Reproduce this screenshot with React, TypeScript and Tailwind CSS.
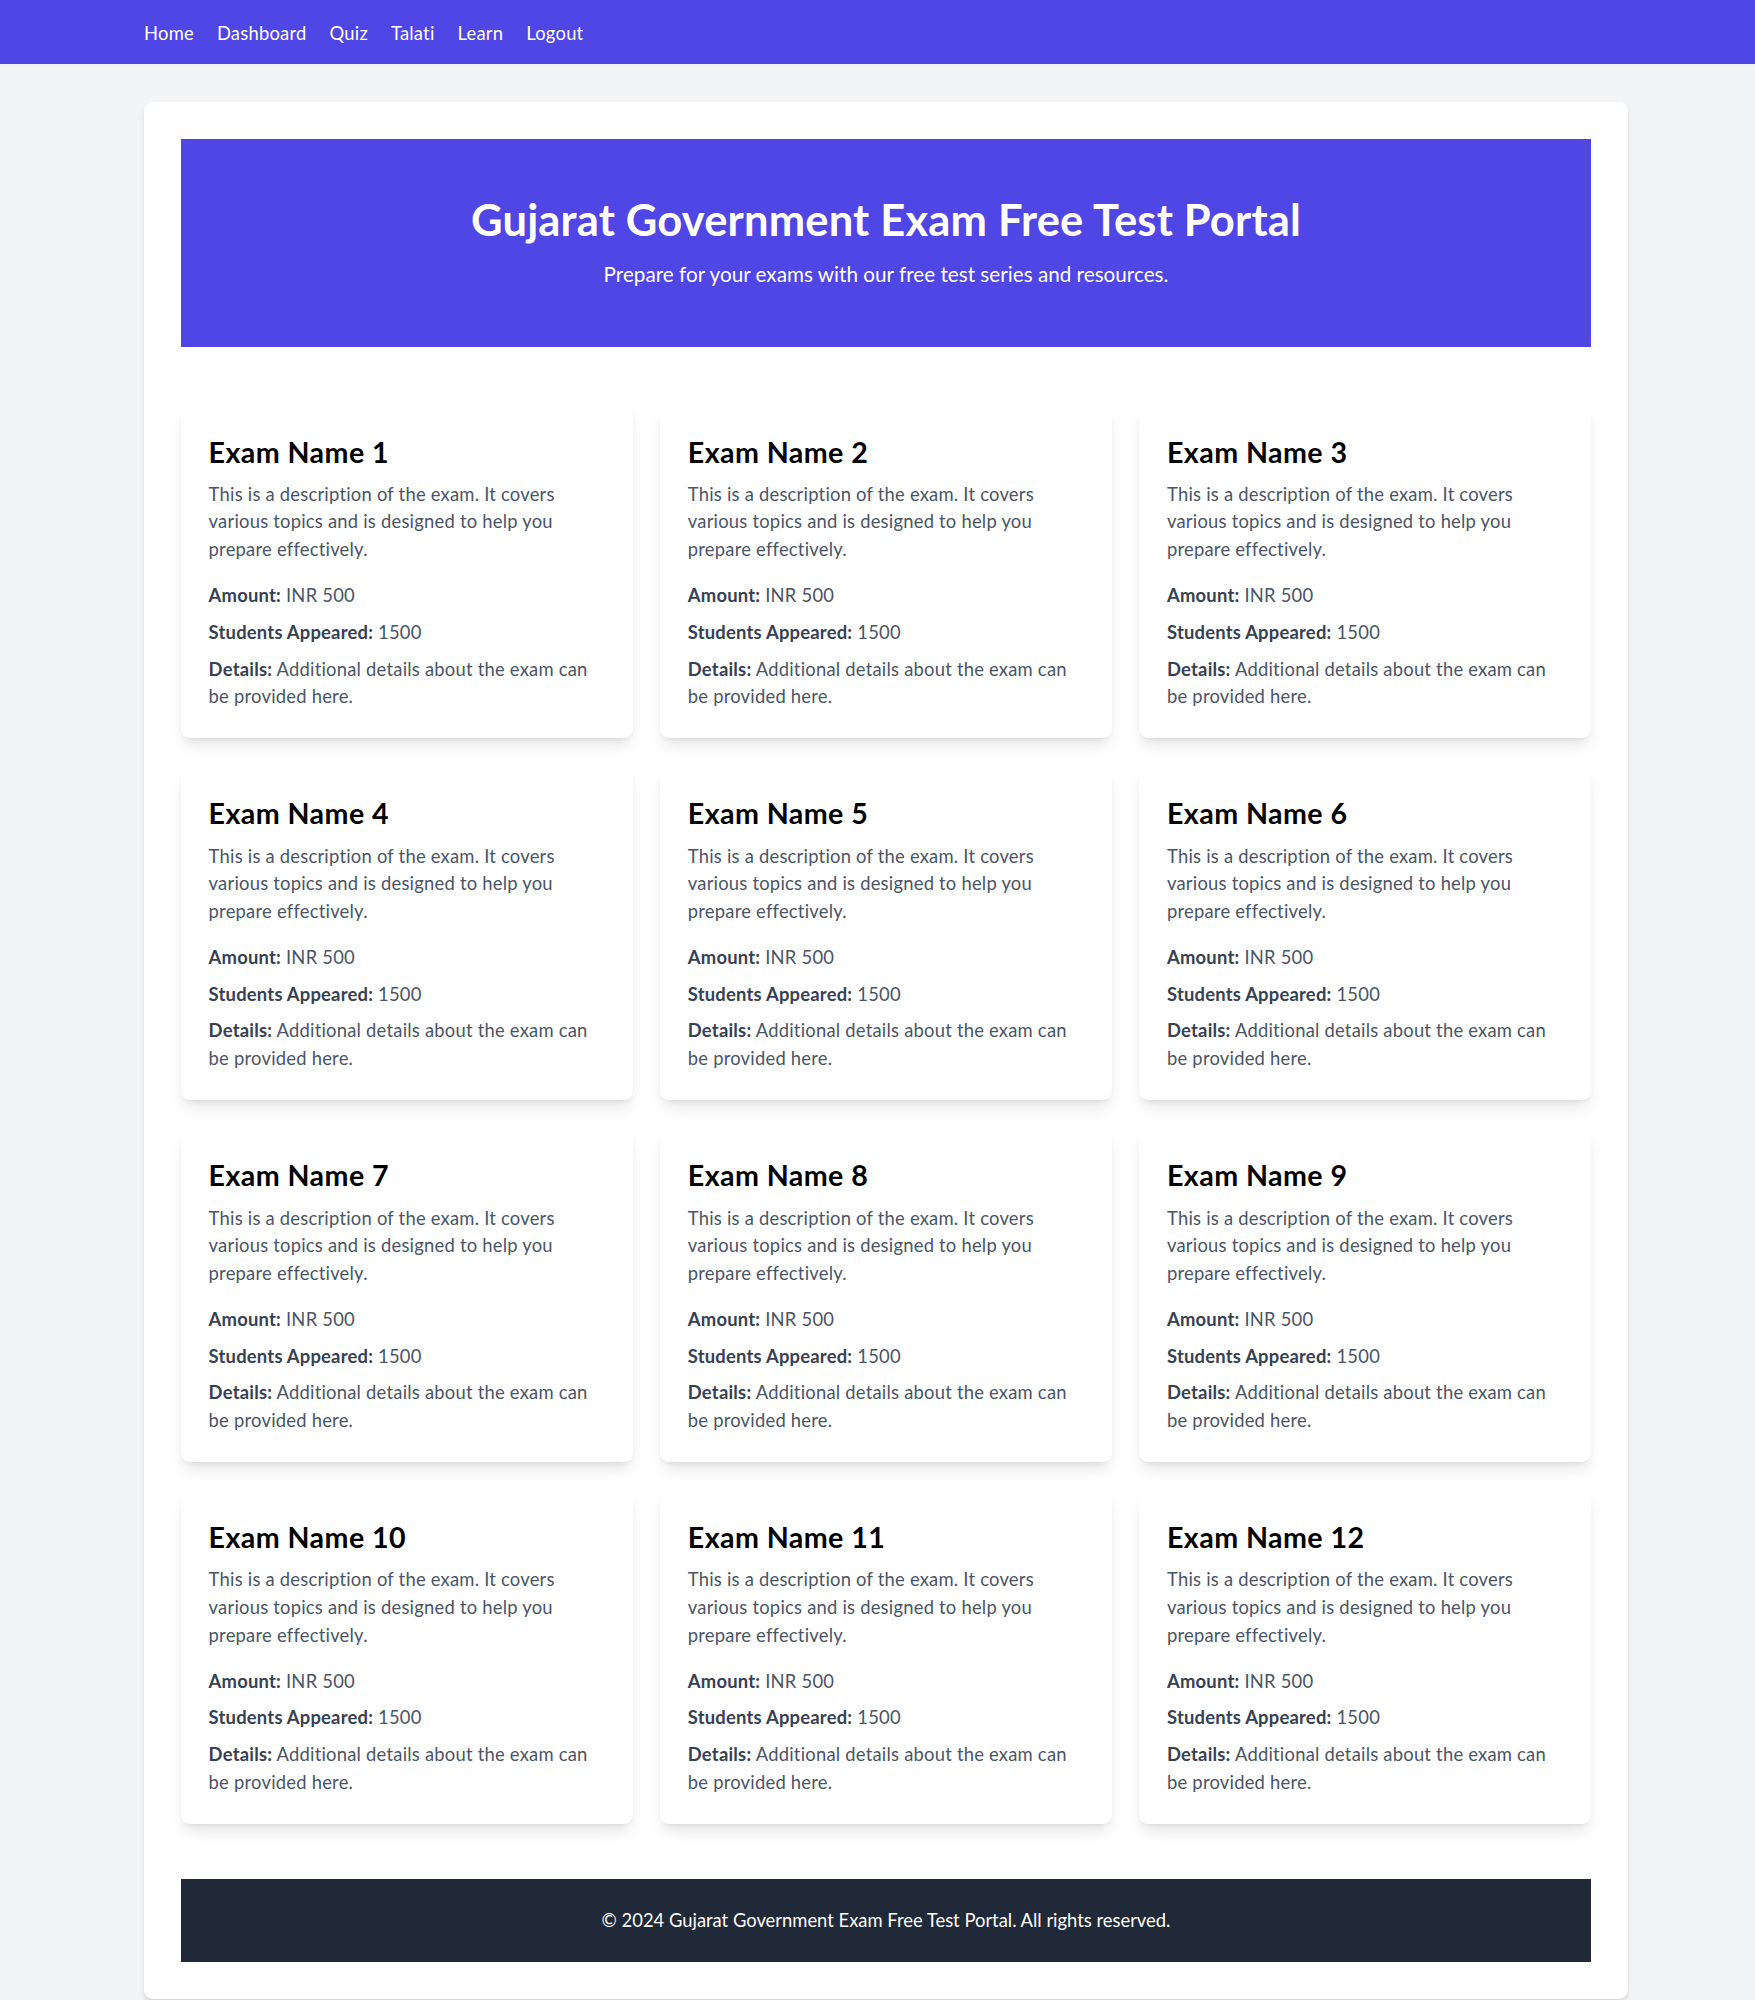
import React from 'react';

const navLinks = ['Home', 'Dashboard', 'Quiz', 'Talati', 'Learn', 'Logout'];

interface Exam {
    id: number;
    name: string;
    description: string;
    amount: string;
    students: number;
    details: string;
}

const exams: Exam[] = Array.from({ length: 12 }, (_, i) => ({
    id: i + 1,
    name: `Exam Name ${i + 1}`,
    description: 'This is a description of the exam. It covers various topics and is designed to help you prepare effectively.',
    amount: 'INR 500',
    students: 1500,
    details: 'Additional details about the exam can be provided here.',
}));

const ExamCard: React.FC<{ exam: Exam }> = ({ exam }) => (
    <div className="bg-white rounded-[9px] shadow-[0_10px_15px_-3px_rgba(0,0,0,0.1),0_4px_6px_-4px_rgba(0,0,0,0.1)] p-[27.6px]">
        <h2 className="text-[28.6px] leading-[40px] font-bold tracking-[0.015em] text-black mb-[9.2px]">{exam.name}</h2>
        <p className="text-gray-600 leading-[27.6px] mb-[18.4px]">{exam.description}</p>
        <p className="text-gray-600 leading-[27.6px] mb-[9.2px]">
            <strong className="text-gray-700">Amount:</strong> {exam.amount}
        </p>
        <p className="text-gray-600 leading-[27.6px] mb-[9.2px]">
            <strong className="text-gray-700">Students Appeared:</strong> {exam.students}
        </p>
        <p className="text-gray-600 leading-[27.6px]">
            <strong className="text-gray-700">Details:</strong> {exam.details}
        </p>
    </div>
);

export default function App() {
    return (
        <div
            className="min-h-screen bg-[#f3f4f6] text-[18.4px] tracking-[0.012em] pb-[40px]"
            style={{ fontFamily: 'Lato, "Open Sans", sans-serif' }}
        >
            {/* top navigation */}
            <nav className="bg-[#4f46e5] h-[64.4px] pt-[4px] flex items-center pl-[144px] gap-[23px] text-white">
                {navLinks.map((link) => (
                    <a key={link} href="#" className="hover:underline">
                        {link}
                    </a>
                ))}
            </nav>

            <main className="ml-[144px] mt-[37.6px] w-[1484px] bg-white rounded-[9px] shadow-md p-[37px]">
                <header className="bg-[#4f46e5] text-white text-center h-[208px] pt-[56px]">
                    <h1 className="text-[43.5px] leading-[48px] font-bold tracking-[0.004em] mb-[15px]">
                        Gujarat Government Exam Free Test Portal
                    </h1>
                    <p className="text-[20.7px] leading-[32px] tracking-normal">
                        Prepare for your exams with our free test series and resources.
                    </p>
                </header>

                <section className="mt-[57px] grid grid-cols-3 gap-[27.6px]">
                    {exams.map((exam) => (
                        <ExamCard key={exam.id} exam={exam} />
                    ))}
                </section>

                <footer className="mt-[55px] bg-[#1f2937] text-white text-center py-[27.6px] leading-[27.6px] tracking-normal">
                    © 2024 Gujarat Government Exam Free Test Portal. All rights reserved.
                </footer>
            </main>
        </div>
    );
}
